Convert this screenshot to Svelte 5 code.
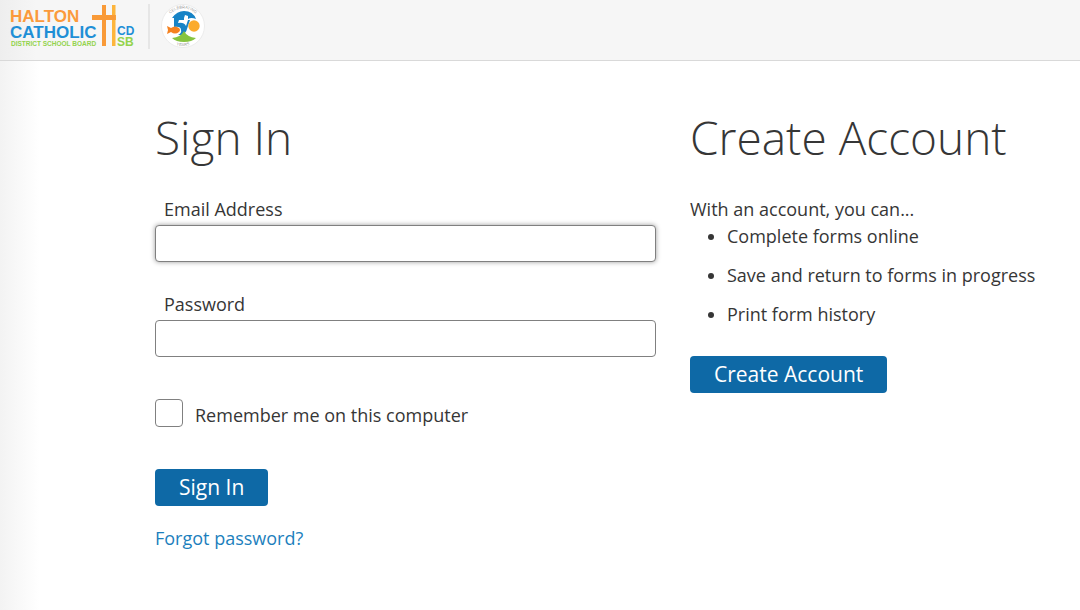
<script lang="ts">
  const benefits = [
    "Complete forms online",
    "Save and return to forms in progress",
    "Print form history",
  ];

  let email = $state("");
  let password = $state("");
  let remember = $state(false);
</script>

<div class="page">
  <header class="header">
    <svg class="logo" width="126" height="45" viewBox="0 0 126 45" role="img" aria-label="Halton Catholic District School Board">
      <g font-family="Liberation Sans, Arial, sans-serif" font-weight="bold">
        <text x="0" y="18" font-size="17" fill="#fb9a3c">HALTON</text>
        <text x="0" y="34" font-size="17" fill="#1f8fd6">CATHOLIC</text>
        <text x="1" y="42" font-size="6.500" fill="#93d34c">DISTRICT SCHOOL BOARD</text>
        <text x="107" y="31" font-size="12" fill="#1f8fd6">CD</text>
        <text x="107" y="42" font-size="12" fill="#93d34c">SB</text>
      </g>
      <path d="M92 1h4v41h-4zM82 11h24v5H82z" fill="#f99a38" />
      <path d="M102 1h3.500v41H102z" fill="#fdb53c" />
      <path d="M96 11h9.500v5H96z" fill="#f99a38" />
    </svg>
    <span class="divider"></span>
    <svg class="badge" width="44" height="44" viewBox="0 0 44 44" role="img" aria-label="Celebrating 50 years">
      <defs>
        <path id="arc-top" d="M4.500 22a17.500 17.500 0 0 1 35 0" />
        <path id="arc-bottom" d="M2 22a20 20 0 0 0 40 0" />
      </defs>
      <circle cx="22" cy="22" r="21.500" fill="#fff" stroke="#ececec" />
      <g font-family="Liberation Sans, Arial, sans-serif" font-size="4" fill="#999" text-anchor="middle">
        <text><textPath href="#arc-top" startOffset="50%">CELEBRATING</textPath></text>
        <text><textPath href="#arc-bottom" startOffset="50%">YEARS</textPath></text>
      </g>
      <path d="M11 14Q16 7 23 7q9 0 12 8-5-2-8 0v-3l-3-1-1 3z" fill="#1683c6" />
      <path d="M13 14h10v2h-5l-1 3q6-1 8 3l2-6h2l-3 9q-1 4-5 6h-4q4-2 3-5 0-4-7-3z" fill="#1683c6" />
      <path d="M23 27q3 6 12 7-4 4-12 4t-12-4q9-1 12-7z" fill="#86c440" />
      <path d="M6 22l4 2q4-3 8 0 2 2 0 4-4 3-8 0l-4 2 1-4z" fill="#f58220" />
      <circle cx="33" cy="22" r="5.700" fill="#fbab2c" />
    </svg>
  </header>

  <main class="content">
    <form class="sign-in" onsubmit={(e) => e.preventDefault()}>
      <h1>Sign In</h1>
      <div class="field">
        <label for="email">Email Address</label>
        <input id="email" class="text-input raised" type="email" bind:value={email} />
      </div>
      <div class="field">
        <label for="password">Password</label>
        <input id="password" class="text-input" type="password" bind:value={password} />
      </div>
      <div class="remember">
        <input id="remember" type="checkbox" bind:checked={remember} />
        <label for="remember">Remember me on this computer</label>
      </div>
      <button class="button" type="submit">Sign In</button>
      <a class="forgot" href="#forgot">Forgot password?</a>
    </form>

    <section class="create">
      <h1>Create Account</h1>
      <p>With an account, you can...</p>
      <ul>
        {#each benefits as benefit}
          <li>{benefit}</li>
        {/each}
      </ul>
      <button class="button" type="button">Create Account</button>
    </section>
  </main>
</div>

<style>
  :global(body) {
    background: #fff;
  }

  .page {
    min-height: 100vh;
    background: linear-gradient(to right, #f3f3f3, #fff 40px);
    color: #363636;
    font-family: "Open Sans", sans-serif;
    font-size: 18px;
    line-height: 24px;
  }

  .header {
    display: flex;
    align-items: flex-start;
    padding: 4px 10px 11px;
    background: linear-gradient(to right, #eee, #f6f6f6 36px);
    border-bottom: 1px solid #d9d9d9;
  }

  .divider {
    width: 2px;
    height: 45px;
    margin: 0 11px 0 12px;
    background: #e6e6e6;
  }

  .content {
    display: grid;
    grid-template-columns: minmax(0, 501px) minmax(0, 1fr);
    gap: 34px;
    padding: 44px 16px 32px 155px;
  }

  h1 {
    margin: 0 0 28px;
    font-size: 46px;
    font-weight: 300;
    line-height: 64px;
  }

  .sign-in,
  .create {
    display: flex;
    flex-direction: column;
    align-items: flex-start;
  }

  .field {
    display: flex;
    flex-direction: column;
    gap: 4px;
    width: 100%;
    margin-bottom: 30px;
  }

  .field label {
    padding-left: 9px;
  }

  .text-input {
    box-sizing: border-box;
    width: 100%;
    height: 37px;
    padding: 4px 9px;
    background: #fff;
    border: 1px solid #808080;
    border-radius: 4px;
    font: inherit;
    color: inherit;
    outline: none;
  }

  .raised {
    box-shadow: 0 0 5px rgba(0, 0, 0, 0.4);
  }

  .remember {
    display: flex;
    align-items: flex-end;
    gap: 12px;
    margin: 12px 0 42px;
  }

  .remember input {
    appearance: none;
    width: 28px;
    height: 28px;
    margin: 0;
    background: #fff;
    border: 1px solid #808080;
    border-radius: 4px;
  }

  .remember input:checked {
    background: #0e69a6;
  }

  .button {
    height: 37px;
    padding: 0 24px;
    background: #0e69a6;
    border: 0;
    border-radius: 4px;
    color: #fff;
    font-family: inherit;
    font-size: 21px;
    line-height: 37px;
    cursor: pointer;
  }

  .forgot {
    margin-top: 20px;
    color: #1c7fbd;
    text-decoration: none;
  }

  .create p {
    margin: 0 0 3px;
  }

  .create ul {
    display: grid;
    gap: 15px;
    margin: 0 0 30px;
    padding-left: 37px;
  }
</style>
